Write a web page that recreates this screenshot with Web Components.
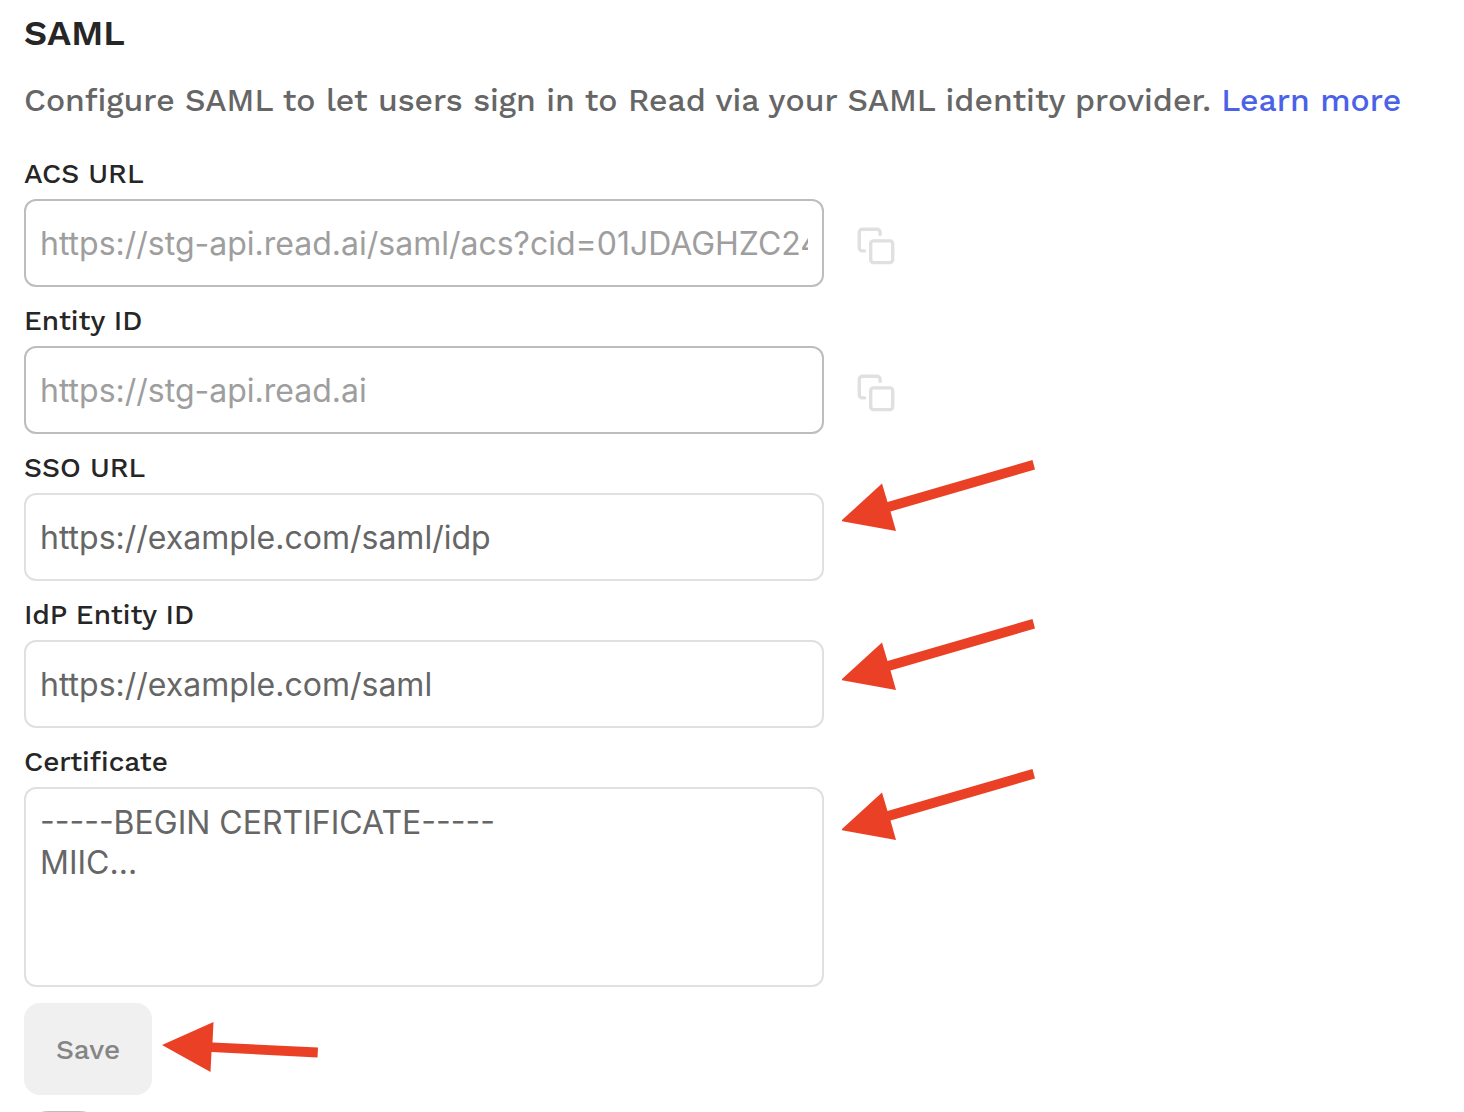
<!DOCTYPE html>
<html lang="en">
<head>
<meta charset="utf-8">
<meta name="viewport" content="width=device-width, initial-scale=1">
<title>SAML</title>
<style>
  html { overflow: hidden; }
  body { margin: 0; background: #fff; font-family: "Work Sans", Inter, sans-serif; color: #262626; }
</style>
</head>
<body>
<saml-settings></saml-settings>
<script>
  const define = (name, html, setup) => {
    const template = document.createElement("template");
    template.innerHTML = html;
    customElements.define(name, class extends HTMLElement {
      constructor() {
        super();
        this.attachShadow({ mode: "open" }).append(template.content.cloneNode(true));
      }
      connectedCallback() {
        if (setup) setup(this, this.shadowRoot);
      }
    });
  };

  define("callout-arrow", `
    <style>
      :host { display: block; pointer-events: none; }
      svg { display: block; fill: #ea4126; }
      .flat, :host([flat]) .slanted { display: none; }
      :host([flat]) .flat { display: block; }
    </style>
    <svg class="slanted" width="196" height="74" viewBox="0 0 196 74" aria-hidden="true">
      <path d="M-1 61 40 23.500 45.500 42 190.500 0 193 9.500 48.500 51.500 54 71Z"/>
    </svg>
    <svg class="flat" width="160" height="52" viewBox="0 0 160 52" aria-hidden="true">
      <path d="M0 23 51.500 0 50.500 20.500 156 25.500 155.500 35.500 49.500 30 48.500 50Z"/>
    </svg>
  `);

  define("copy-button", `
    <style>
      :host { display: block; }
      button { display: block; padding: 0; border: 0; background: none; color: #e0e0e0; }
      svg { display: block; fill: none; stroke: currentColor; stroke-width: 3.4; stroke-linecap: round; stroke-linejoin: round; }
    </style>
    <button type="button" aria-label="Copy">
      <svg width="44" height="44" viewBox="0 0 44 44">
        <rect x="16.700" y="19.900" width="22" height="21.700" rx="2.800"/>
        <path d="M10.500 29.900H8.300a3 3 0 0 1-3-3V11.200a3 3 0 0 1 3-3h14.800a3 3 0 0 1 3 3v2.200"/>
      </svg>
    </button>
  `);

  define("form-field", `
    <style>
      :host { display: block; }
      label { display: block; font-size: 28px; font-weight: 500; line-height: 40px; padding-bottom: 5px; }
      .row { display: flex; align-items: center; gap: 30px; }
      .box { position: relative; flex: 0 1 800px; min-width: 0; }
      input, textarea {
        display: block; box-sizing: border-box; width: 100%; margin: 0;
        border: 2px solid #e0e0e0; border-radius: 12px; background: #fff; color: #666;
        font: 400 32px/40px Inter, sans-serif; outline: 0; resize: none;
      }
      input { height: 88px; padding: 0 14px; }
      textarea { height: 200px; padding: 14px; overflow: hidden; }
      input:disabled { border-color: #bdbdbd; color: #9e9e9e; opacity: 1; }
      .callout { position: absolute; left: 100%; top: 0; margin-left: 18px; }
      .callout ::slotted(*) { margin-top: var(--callout-top, 0); }
    </style>
    <label for="control"></label>
    <div class="row">
      <div class="box"><span class="callout"><slot name="callout"></slot></span></div>
      <slot></slot>
    </div>
  `, (host, root) => {
    const box = root.querySelector(".box");
    if (box.querySelector("#control")) return;
    root.querySelector("label").textContent = host.getAttribute("label");
    const control = document.createElement(host.hasAttribute("multiline") ? "textarea" : "input");
    control.id = "control";
    control.spellcheck = false;
    control.value = host.getAttribute("value");
    control.disabled = host.hasAttribute("disabled");
    box.prepend(control);
  });

  define("save-button", `
    <style>
      :host { display: block; }
      button {
        display: block; height: 92px; padding: 0 32px; border: 0; border-radius: 16px;
        background: #f0f0f0; color: #858585; font: inherit; font-size: 28px; font-weight: 500;
      }
    </style>
    <button type="submit" disabled><slot></slot></button>
  `);

  define("toggle-switch", `
    <style>
      :host { display: block; }
      input {
        appearance: none; display: block; box-sizing: border-box; width: 80px; height: 48px;
        margin: 0; border: 2px solid #bdbdbd; border-radius: 24px; background: #bdbdbd;
      }
    </style>
    <input type="checkbox" role="switch" aria-label="Enable">
  `);

  define("saml-settings", `
    <style>
      :host { display: block; padding: 9px 24px 0; }
      h1 { margin: 0; font-size: 36px; font-weight: 600; line-height: 48px; }
      p { margin: 19px 0 30px; font-size: 32px; font-weight: 500; line-height: 48px; color: #666; }
      a { color: #4a62e8; text-decoration: none; }
      form { display: flex; flex-direction: column; gap: 14px; }
      .actions { display: flex; align-items: flex-start; gap: 10px; padding: 2px 0; }
      .actions callout-arrow { padding-top: 19px; }
      .sso { --callout-top: -33px; }
      .idp { --callout-top: -21px; }
      .certificate { --callout-top: -18px; }
    </style>
    <h1>SAML</h1>
    <p>Configure SAML to let users sign in to Read via your SAML identity provider. <a href="#">Learn more</a></p>
    <form>
      <form-field label="ACS URL" value="https://stg-api.read.ai/saml/acs?cid=01JDAGHZC24" disabled><copy-button></copy-button></form-field>
      <form-field label="Entity ID" value="https://stg-api.read.ai" disabled><copy-button></copy-button></form-field>
      <form-field class="sso" label="SSO URL" value="https://example.com/saml/idp"><callout-arrow slot="callout"></callout-arrow></form-field>
      <form-field class="idp" label="IdP Entity ID" value="https://example.com/saml"><callout-arrow slot="callout"></callout-arrow></form-field>
      <form-field class="certificate" label="Certificate" value="-----BEGIN CERTIFICATE-----&#10;MIIC..." multiline><callout-arrow slot="callout"></callout-arrow></form-field>
      <div class="actions"><save-button>Save</save-button><callout-arrow flat></callout-arrow></div>
      <toggle-switch></toggle-switch>
    </form>
  `);
</script>
</body>
</html>
